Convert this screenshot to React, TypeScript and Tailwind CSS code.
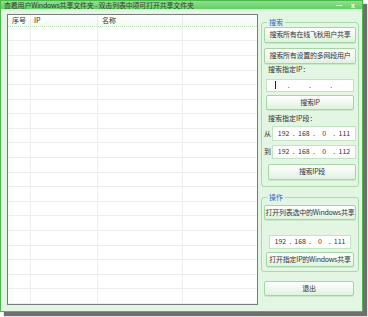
import React from "react";

const Btn = ({ children, className = "" }: { children: React.ReactNode; className?: string }) => (
  <button
    className={`flex items-center justify-center whitespace-nowrap rounded-[2px] border border-[#a3d6a3] bg-linear-to-b from-[#ffffff] to-[#e0f2e0] text-[7px] leading-none tracking-[-0.25px] text-[#333] shadow-[0_1px_0_#c9e9c9] ${className}`}
  >
    {children}
  </button>
);

const IpBox = ({ values, className = "" }: { values?: string[]; className?: string }) => {
  const v = values ?? ["", "", "", ""];
  return (
    <div className={`flex items-center border border-[#c3e3c3] bg-white px-[3px] text-[7px] leading-none text-[#333] ${className}`}>
      {v.map((n, i) => (
        <React.Fragment key={i}>
          <span className="flex flex-1 justify-center">
            {!values && i === 0 ? <span className="mr-[6px] h-[8px] w-px bg-[#222]" /> : n}
          </span>
          {i < 3 && <span className="w-[5px] text-center">.</span>}
        </React.Fragment>
      ))}
    </div>
  );
};

const Group = ({ title, children, className = "" }: { title: string; children: React.ReactNode; className?: string }) => (
  <div className={`relative flex flex-col rounded-[3px] border border-[#a9dba9] px-[2px] ${className}`}>
    <span className="absolute -top-[5px] left-[5px] bg-[#e3f5e3] px-[2px] text-[7px] leading-[9px] text-[#2f5fd0]">
      {title}
    </span>
    {children}
  </div>
);

const rows = Array.from({ length: 19 });

export default function App() {
  return (
    <div className="h-[317px] w-[368px] bg-white font-['Noto_Sans_CJK_SC','Microsoft_YaHei',sans-serif]">
      <div className="flex h-[312px] w-[363px] flex-col border border-[#4db94d] bg-[#e3f5e3] shadow-[4px_4px_1px_#6f6f6f]">
        {/* title bar */}
        <div className="flex h-[15px] items-center bg-linear-to-b from-[#8fe08f] to-[#62cf62] pl-[3px] pr-[7px]">
          <span className="whitespace-nowrap text-[7px] leading-none tracking-[-0.2px] text-[#3a3a3a]">
            查看用户Windows共享文件夹 - 双击列表中项可打开共享文件夹
          </span>
          <span className="ml-auto mr-[9px] h-px w-[6px] bg-white" />
          <span className="text-[7px] font-bold leading-none text-white">x</span>
        </div>
        <div className="h-[3px] bg-linear-to-b from-[#c6efc6] to-[#e3f5e3]" />

        {/* body */}
        <div className="flex flex-1 pb-[6px] pl-[6px] pr-[2px] pt-[3px]">
          {/* list */}
          <div className="w-[251px] overflow-hidden border border-[#7a7a7a] bg-white">
            <div className="grid h-[12px] grid-cols-[23px_67px_85px_1fr] border-b border-dotted border-[#bfe0bf] bg-linear-to-b from-[#ffffff] to-[#f1faf1] text-[7px] leading-none text-[#333]">
              <div className="flex items-center border-r border-[#ececec] pl-[4px]">序号</div>
              <div className="flex items-center border-r border-[#ececec] pl-[3px]">IP</div>
              <div className="flex items-center border-r border-[#ececec] pl-[4px]">名称</div>
              <div />
            </div>
            {rows.map((_, i) => (
              <div key={i} className="grid h-[14.6px] grid-cols-[23px_67px_85px_1fr] border-b border-[#ededed]">
                <div className="border-r border-[#ededed]" />
                <div className="border-r border-[#ededed]" />
                <div className="border-r border-[#ededed]" />
                <div />
              </div>
            ))}
          </div>

          {/* right panel */}
          <div className="ml-[3px] flex w-[98px] flex-col">
            <Group title="搜索" className="mt-[8px] pb-[6px] pt-[4px]">
              <Btn className="h-[16px]">搜索所有在线飞秋用户共享</Btn>
              <Btn className="mt-[5px] h-[16px]">搜索所有设置的多网段用户</Btn>
              <div className="mt-[1px] pl-[4px] text-[7px] leading-[9px] text-[#333]">搜索指定IP：</div>
              <IpBox className="mx-[2px] mt-[5px] h-[13px]" />
              <Btn className="mx-[2px] mt-[3px] h-[15px]">搜索IP</Btn>
              <div className="mt-[4px] pl-[4px] text-[7px] leading-[9px] text-[#333]">搜索指定IP段：</div>
              <div className="mt-[3px] flex items-center">
                <span className="w-[8px] text-[7px] leading-none text-[#333]">从</span>
                <IpBox values={["192", "168", "0", "111"]} className="h-[15px] flex-1" />
              </div>
              <div className="mt-[4px] flex items-center">
                <span className="w-[8px] text-[7px] leading-none text-[#333]">到</span>
                <IpBox values={["192", "168", "0", "112"]} className="h-[14px] flex-1" />
              </div>
              <Btn className="ml-[4px] mt-[5px] h-[16px]">搜索IP段</Btn>
            </Group>

            <Group title="操作" className="mt-[10px] px-[1px] pb-[4px] pt-[7px]">
              <Btn className="h-[15px]">打开列表选中的Windows共享</Btn>
              <IpBox values={["192", "168", "0", "111"]} className="mx-[5px] mt-[15px] h-[14px]" />
              <Btn className="mx-[2px] mt-[3px] h-[15px]">打开指定IP的Windows共享</Btn>
            </Group>

            <Btn className="ml-[3px] mr-[5px] mt-[9px] h-[15px]">退出</Btn>
          </div>
        </div>
      </div>
    </div>
  );
}
